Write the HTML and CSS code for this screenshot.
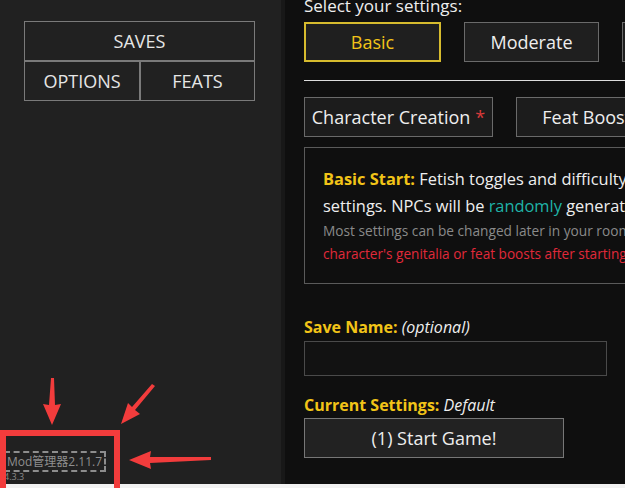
FILE: index.html
```html
<!DOCTYPE html>
<html>
<head>
<meta charset="utf-8">
<link rel="stylesheet" href="styles.css">
</head>
<body>
<div class="app">
  <aside class="sidebar">
    <div class="menu">
      <div class="menu-btn wide">SAVES</div>
      <div class="menu-btn">OPTIONS</div>
      <div class="menu-btn">FEATS</div>
    </div>
    <div class="footer">
      <div class="mod-tag">Mod管理器2.11.7</div>
      <div class="version">4.3.3</div>
    </div>
  </aside>
  <main class="main">
    <div class="intro">Select your settings:</div>
    <div class="row presets">
      <div class="btn active">Basic</div>
      <div class="btn">Moderate</div>
      <div class="btn">Advanced</div>
    </div>
    <hr class="rule">
    <div class="row tabs">
      <div class="btn tab">Character Creation <span class="req">*</span></div>
      <div class="btn tab">Feat Boosts</div>
    </div>
    <div class="info">
      <p class="lead"><b class="hl">Basic Start:</b> Fetish toggles and difficulty use the default</p>
      <p class="lead">settings. NPCs will be <span class="teal">randomly</span> generated.</p>
      <p class="note">Most settings can be changed later in your room, but you cannot change your</p>
      <p class="warn">character's genitalia or feat boosts after starting the game.</p>
    </div>
    <div class="label"><b class="hl">Save Name:</b> <i>(optional)</i></div>
    <div class="input"></div>
    <div class="label current"><b class="hl">Current Settings:</b> <i>Default</i></div>
    <div class="btn start">(1) Start Game!</div>
  </main>
</div>
<svg class="annot" width="625" height="488" viewBox="0 0 625 488">
  <rect x="3" y="433" width="114" height="58" fill="none" stroke="#f23c3c" stroke-width="6"/>
  <polygon points="51,378 54,378 55,405 61,404 52,425 43,404 49,405" fill="#f23c3c"/>
  <polygon points="152,384 155,386 135,410 140,414 121,424 128,403 132,407" fill="#f23c3c"/>
  <polygon points="211,457 211,460 150,463 151,469 129,460 151,451 150,457" fill="#f23c3c"/>
</svg>
</body>
</html>
```
FILE: styles.css
```css
html, body {
  margin: 0;
  padding: 0;
}
body {
  background: #f2f2f2;
  width: 625px;
  height: 488px;
  overflow: hidden;
  position: relative;
  font-family: "Open Sans", "Noto Sans", "Noto Sans CJK SC", sans-serif;
}
.app {
  display: flex;
  height: 484px;
  overflow: hidden;
  background: #0f0f0f;
}
.sidebar {
  flex: 0 0 285px;
  box-sizing: border-box;
  background: #212121;
  border-right: 4px solid #181818;
  display: flex;
  flex-direction: column;
  padding: 21px 0 0 24px;
}
.menu {
  display: grid;
  grid-template-columns: 116px 115px;
  width: 231px;
}
.menu-btn {
  border: 1px solid #7a7a7a;
  color: #e6e6e6;
  font-size: 18px;
  height: 38px;
  display: flex;
  align-items: center;
  justify-content: center;
}
.menu-btn.wide {
  grid-column: 1 / 3;
}
.footer {
  margin-top: auto;
  margin-left: -20px;
  padding-bottom: 2px;
}
.mod-tag {
  display: inline-block;
  border: 2px dashed #8d8d8d;
  color: #8f8f8f;
  font-size: 12px;
  line-height: 17px;
  padding: 0 2px 0 1px;
}
.version {
  color: #8a8a8a;
  font-size: 9px;
  line-height: 10px;
}
.main {
  flex: 0 0 auto;
  width: 700px;
  padding: 0 0 0 19px;
  margin-top: -6px;
  color: #eeeeee;
}
.intro {
  font-size: 17px;
  line-height: 24px;
}
.row {
  display: flex;
  gap: 23px;
}
.presets {
  margin-top: 4px;
}
.btn {
  box-sizing: border-box;
  height: 40px;
  border: 1px solid #6a6a6a;
  background: #1f1f1f;
  color: #eeeeee;
  font-size: 18px;
  display: flex;
  align-items: center;
  justify-content: center;
  width: 135px;
}
.btn.active {
  border: 2px solid #d6bb2e;
  color: #f2c418;
  width: 137px;
}
.rule {
  border: 0;
  border-top: 1px solid #dddddd;
  margin: 18px 0 16px 0;
  width: 340px;
}
.tabs .btn {
  width: 189px;
  background: #1c1c1c;
}
.tabs .btn:nth-child(2) {
  width: 150px;
}
.req {
  color: #d83a3a;
  margin-left: 5px;
}
.info {
  margin-top: 10px;
  border: 1px solid #5a5a5a;
  height: 137px;
  width: 340px;
  box-sizing: border-box;
  padding: 17px 0 0 18px;
  white-space: nowrap;
  overflow: hidden;
}
.info p {
  margin: 0;
}
.lead {
  font-size: 16.4px;
  line-height: 27px;
}
.hl {
  color: #f2c418;
  font-weight: 700;
}
.teal {
  color: #1fb3a8;
}
.note {
  color: #8a8a8a;
  font-size: 13.7px;
  line-height: 24px;
}
.warn {
  color: #e0293a;
  font-size: 13.6px;
  line-height: 22px;
}
.label {
  font-size: 16px;
  line-height: 22px;
  margin-top: 32px;
}
.label i {
  color: #eeeeee;
}
.input {
  margin-top: 3px;
  width: 303px;
  height: 35px;
  box-sizing: border-box;
  border: 1px solid #4a4a4a;
  background: #121212;
}
.current {
  margin-top: 18px;
}
.btn.start {
  margin-top: 2px;
  width: 260px;
  background: #222222;
  border-color: #777777;
}
.annot {
  position: absolute;
  left: 0;
  top: 0;
}
```
